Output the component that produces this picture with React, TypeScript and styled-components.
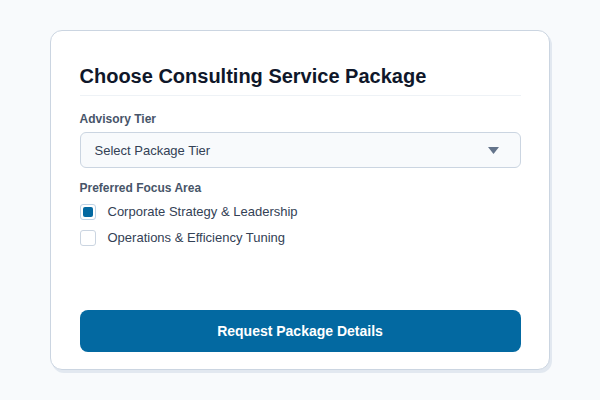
import { FC, useState } from 'react'
import styled, { createGlobalStyle } from 'styled-components'

const GlobalStyle = createGlobalStyle`
  html, body {
    margin: 0;
    padding: 0;
    background: #f8fafc;
    font-family: "Liberation Sans", Arial, sans-serif;
  }
`

const focusAreas = [
  { id: 'strategy', label: 'Corporate Strategy & Leadership' },
  { id: 'operations', label: 'Operations & Efficiency Tuning' }
]

const App: FC = () => {
  const [selected, setSelected] = useState<Record<string, boolean>>({
    strategy: true
  })

  const toggle = (id: string) =>
    setSelected((prev) => ({ ...prev, [id]: !prev[id] }))

  return (
    <>
      <GlobalStyle />
      <Page>
        <Card>
          <Title>Choose Consulting Service Package</Title>
          <Field>
            <Label>Advisory Tier</Label>
            <Select>
              <span>Select Package Tier</span>
              <Caret width="11" height="7" viewBox="0 0 11 7">
                <path d="M0 0 H11 L5.5 7 Z" fill="#64748b" />
              </Caret>
            </Select>
          </Field>
          <Field>
            <Label>Preferred Focus Area</Label>
            <Options>
              {focusAreas.map((area) => (
                <Option key={area.id} onClick={() => toggle(area.id)}>
                  <Box checked={!!selected[area.id]} />
                  {area.label}
                </Option>
              ))}
            </Options>
          </Field>
          <Button>Request Package Details</Button>
        </Card>
      </Page>
    </>
  )
}

export default App

const Page = styled.div`
  width: 600px;
  height: 400px;
  box-sizing: border-box;
  padding-top: 30px;
  display: flex;
  justify-content: center;
  align-items: flex-start;
`

const Card = styled.div`
  width: 500px;
  height: 340px;
  box-sizing: border-box;
  background: #ffffff;
  border: 1.5px solid #cbd5e1;
  border-radius: 12px;
  box-shadow: 2px 3px 0 #e2e8f0;
  padding: 33px 28.5px 17px;
  display: flex;
  flex-direction: column;
`

const Title = styled.h1`
  margin: 0 0 16px;
  padding-bottom: 7px;
  border-bottom: 1px solid #eef2f6;
  font-size: 20px;
  font-weight: 700;
  color: #0f172a;
  line-height: 24px;
`

const Field = styled.div`
  display: flex;
  flex-direction: column;
  margin-bottom: 13px;
`

const Label = styled.div`
  font-size: 12px;
  font-weight: 700;
  color: #475569;
  line-height: 15px;
  margin-bottom: 5px;
`

const Select = styled.div`
  height: 36px;
  box-sizing: border-box;
  background: #f8fafc;
  border: 1px solid #cbd5e1;
  border-radius: 6px;
  padding: 0 21px 0 14px;
  display: flex;
  align-items: center;
  justify-content: space-between;
  font-size: 13px;
  color: #334155;
`

const Caret = styled.svg`
  display: block;
`

const Options = styled.div`
  display: flex;
  flex-direction: column;
  gap: 10px;
  margin-top: 3px;
`

const Option = styled.label`
  display: flex;
  align-items: center;
  gap: 12px;
  font-size: 13px;
  color: #334155;
  line-height: 16px;
  cursor: pointer;
`

const Box = styled.span<{ checked: boolean }>`
  width: 16px;
  height: 16px;
  box-sizing: border-box;
  border: 1px solid ${(p) => (p.checked ? '#bfd3e6' : '#cbd5e1')};
  border-radius: 3px;
  background: #ffffff;
  display: flex;
  align-items: center;
  justify-content: center;

  &::after {
    content: '';
    width: 10px;
    height: 10px;
    border-radius: 2px;
    background: ${(p) => (p.checked ? '#0369a1' : 'transparent')};
  }
`

const Button = styled.button`
  margin-top: auto;
  height: 42px;
  border: none;
  border-radius: 8px;
  background: #0369a1;
  color: #ffffff;
  font-family: inherit;
  font-size: 14px;
  font-weight: 700;
  cursor: pointer;
`
